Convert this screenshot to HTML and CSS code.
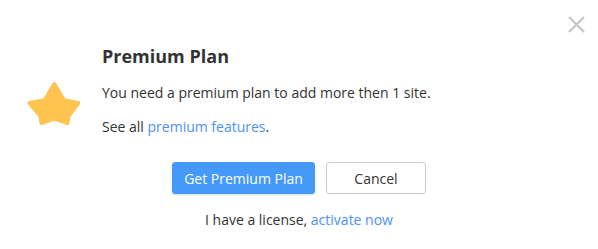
FILE: index.html
```html
<!DOCTYPE html>
<html lang="en">
<head>
<meta charset="utf-8">
<title>Premium Plan</title>
<link rel="stylesheet" href="styles.css">
</head>
<body>
<div class="modal">
  <button class="close" aria-label="Close">
    <svg width="17" height="17" viewBox="0 0 17 17"><path d="M1 1 L16 16 M16 1 L1 16" stroke="#c4c4c4" stroke-width="2" fill="none"/></svg>
  </button>
  <div class="content">
    <div class="star">
      <svg width="60" height="50" viewBox="0 0 60 50"><polygon points="34.3,4 24.8,20.3 9.5,23 20,35.5 21.5,43 34.3,38.5 47.5,43 48.8,35.5 58.5,23 44,20.3" fill="#ffc44f" stroke="#ffc44f" stroke-width="4" stroke-linejoin="round"/></svg>
    </div>
    <div class="text">
      <h1 class="title">Premium Plan</h1>
      <p class="para">You need a premium plan to add more then 1 site.</p>
      <p class="para">See all <a href="#" class="link">premium features</a>.</p>
    </div>
  </div>
  <div class="actions">
    <button class="btn btn-primary">Get Premium Plan</button>
    <button class="btn btn-default">Cancel</button>
  </div>
  <p class="footer">I have a license, <a href="#" class="link">activate now</a></p>
</div>
</body>
</html>
```
FILE: styles.css
```css
* { box-sizing: border-box; }
html, body { margin: 0; padding: 0; background: #fff; }
body { font-family: "Open Sans", "Liberation Sans", sans-serif; color: #333; }
.modal { position: relative; width: 598px; height: 249px; padding-top: 44px; }
.close { position: absolute; top: 16px; right: 13px; width: 17px; height: 17px; padding: 0; border: 0; background: none; cursor: pointer; }
.close svg { display: block; }
.content { display: flex; align-items: flex-start; }
.star { width: 60px; margin-left: 20px; margin-top: 36px; margin-right: 22px; }
.star svg { display: block; }
.text { display: flex; flex-direction: column; gap: 14px; }
.title { margin: 0 0 1px; font-size: 18px; line-height: 24px; font-weight: 700; color: #333; }
.para { margin: 0; font-size: 14px; line-height: 20px; color: #333; }
.link { color: #4a92f5; text-decoration: none; }
.actions { display: flex; justify-content: center; gap: 11px; margin-top: 25px; }
.btn { height: 32px; font-family: inherit; font-size: 14px; border-radius: 3px; padding: 0; cursor: pointer; }
.btn-primary { width: 143px; background: #4599f9; color: #fff; border: 1px solid #4599f9; box-shadow: 0 1px 2px rgba(0,0,0,0.15); }
.btn-default { width: 100px; background: #fff; color: #333; border: 1px solid #ccc; }
.footer { margin: 16px 0 0; text-align: center; font-size: 14px; line-height: 20px; color: #333; }
```
